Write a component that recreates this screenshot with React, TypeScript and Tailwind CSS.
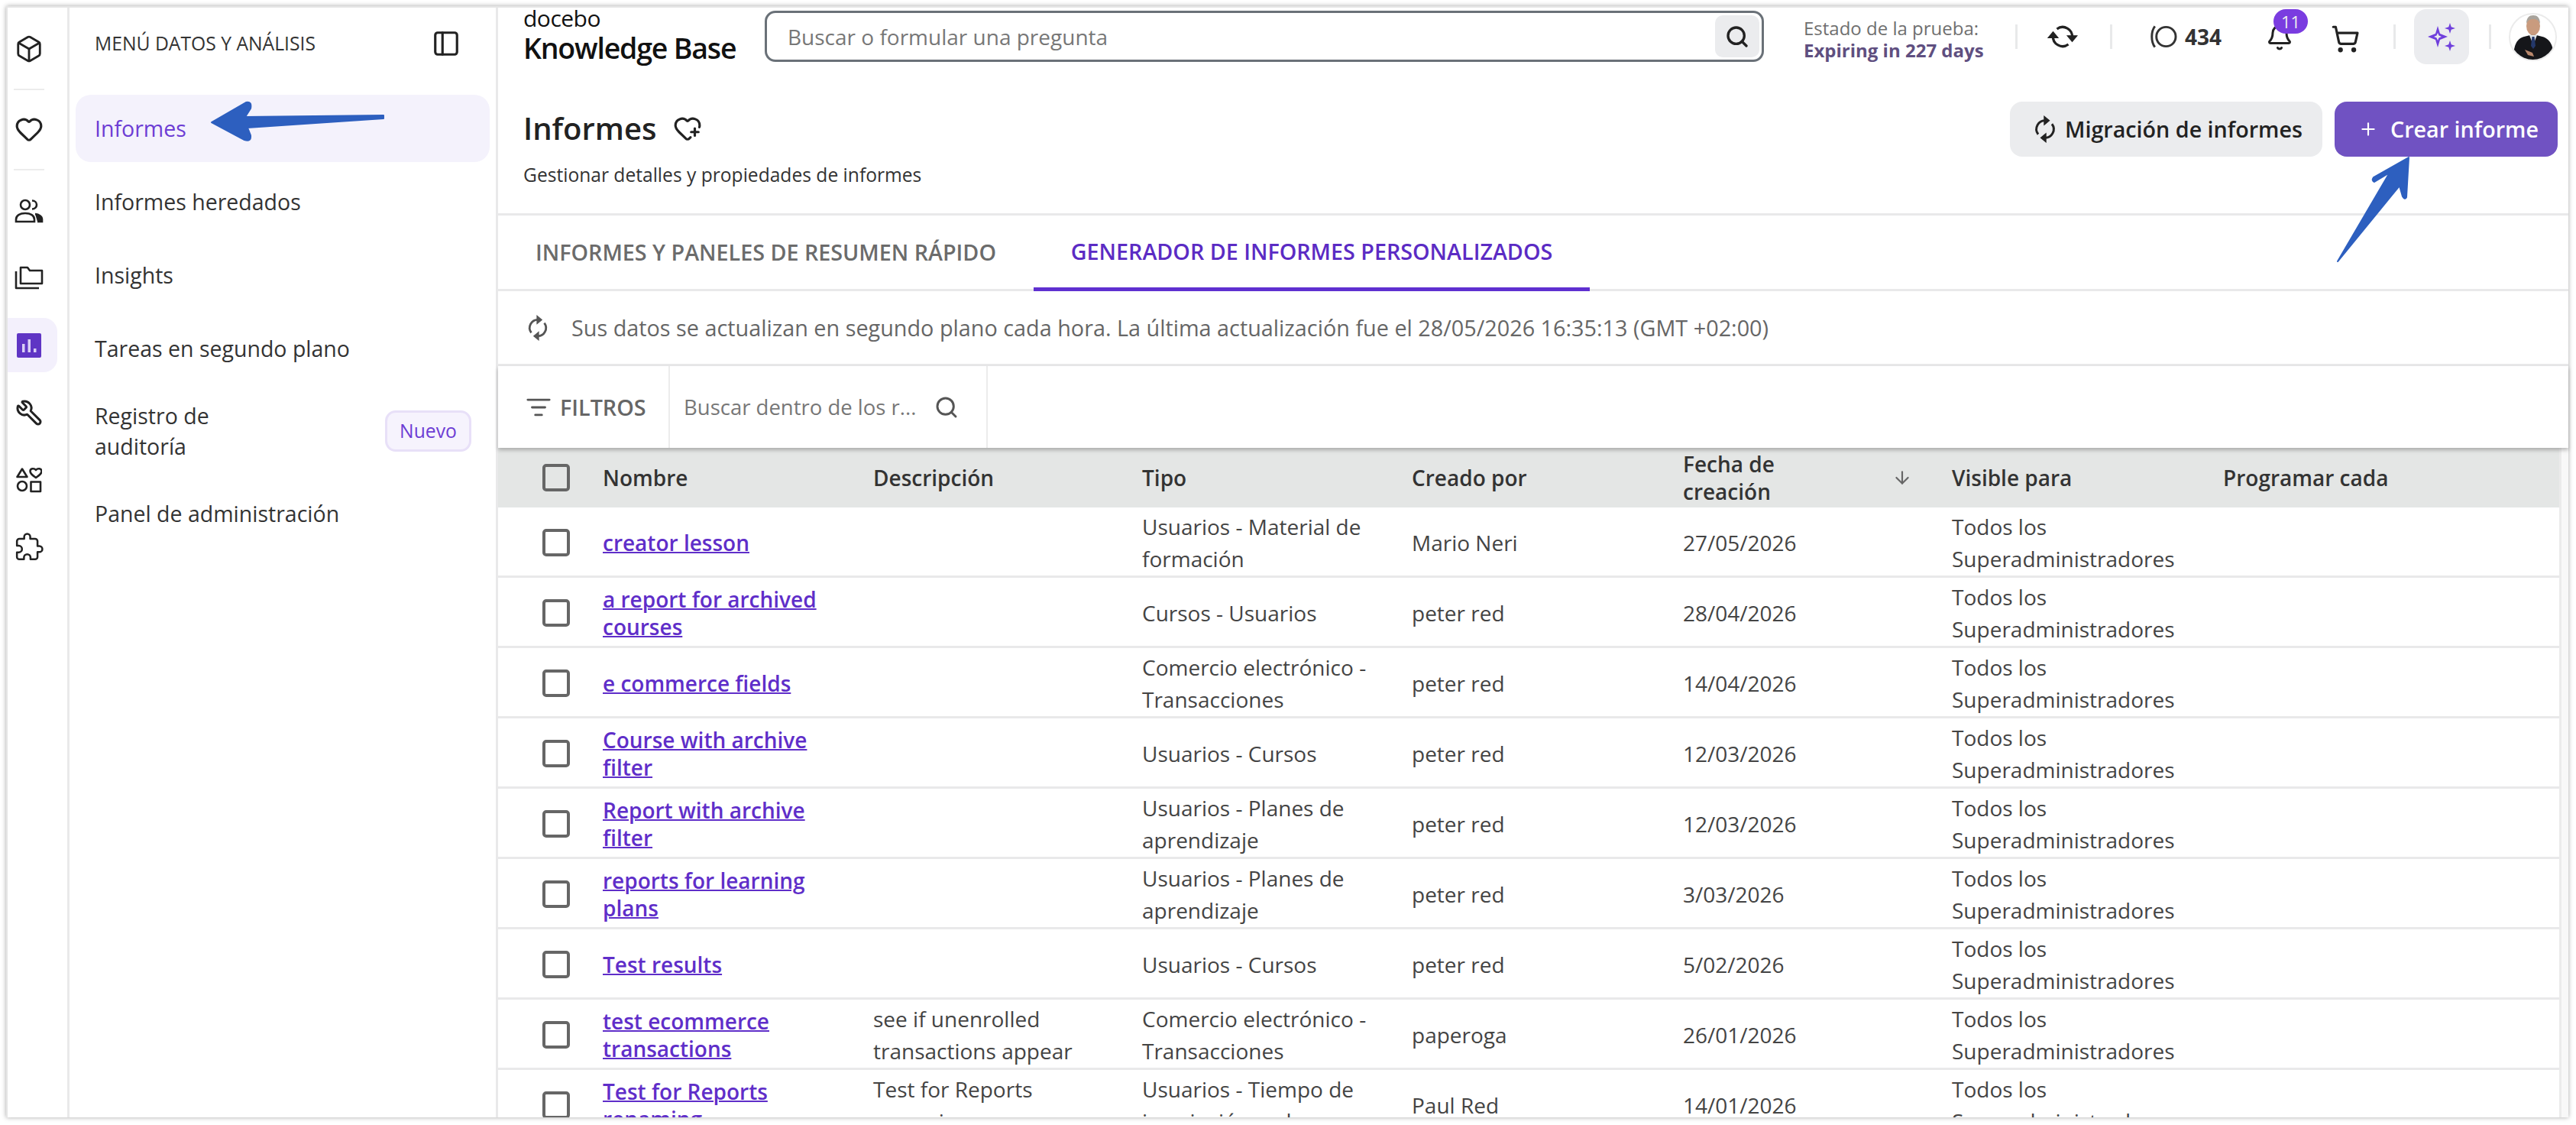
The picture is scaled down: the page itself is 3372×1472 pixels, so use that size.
import { ArrowDown, Bell, Box, Heart, HeartPlus, ListFilter, PanelLeft, Plus, Search, ShoppingCart, Wrench } from "lucide-react";

type Report = {
  name: string;
  description?: string;
  type: string;
  author: string;
  date: string;
};

const reports: Report[] = [
  { name: "creator lesson", type: "Usuarios - Material de formación", author: "Mario Neri", date: "27/05/2026" },
  { name: "a report for archived courses", type: "Cursos - Usuarios", author: "peter red", date: "28/04/2026" },
  { name: "e commerce fields", type: "Comercio electrónico - Transacciones", author: "peter red", date: "14/04/2026" },
  { name: "Course with archive filter", type: "Usuarios - Cursos", author: "peter red", date: "12/03/2026" },
  { name: "Report with archive filter", type: "Usuarios - Planes de aprendizaje", author: "peter red", date: "12/03/2026" },
  { name: "reports for learning plans", type: "Usuarios - Planes de aprendizaje", author: "peter red", date: "3/03/2026" },
  { name: "Test results", type: "Usuarios - Cursos", author: "peter red", date: "5/02/2026" },
  {
    name: "test ecommerce transactions",
    description: "see if unenrolled transactions appear",
    type: "Comercio electrónico - Transacciones",
    author: "paperoga",
    date: "26/01/2026",
  },
  {
    name: "Test for Reports renaming",
    description: "Test for Reports renaming",
    type: "Usuarios - Tiempo de inscripción en los",
    author: "Paul Red",
    date: "14/01/2026",
  },
];

const menuItems = ["Informes heredados", "Insights", "Tareas en segundo plano"];

const columns = "grid grid-cols-[137px_354px_352px_353px_355px_352px_355px_1fr]";

function Checkbox() {
  return <div className="ml-[58px] h-9 w-9 rounded-[5px] border-4 border-[#666]" />;
}

function Divider() {
  return <div className="h-8 w-[3px] bg-[#e8e9ea]" />;
}

function PeopleIcon() {
  return (
    <svg width="38" height="32" viewBox="0 0 38 32" fill="none" stroke="#222" strokeWidth="2.6">
      <circle cx="14" cy="8" r="6" />
      <path d="M2 30v-3c0-5 5-8 12-8s12 3 12 8v3H2Z" />
      <path d="M23 2.500c3.500 0 6 2.500 6 5.500s-2.500 5.500-6 5.500" />
      <path d="M27 20c5 .5 9 3 9 7v3h-6" fill="#222" />
    </svg>
  );
}

function FolderIcon() {
  return (
    <svg width="38" height="32" viewBox="0 0 38 32" fill="none" stroke="#222" strokeWidth="2.6" strokeLinejoin="round">
      <path d="M8 24V3h9l3 4h16v17H8Z" />
      <path d="M2 8v22h30" />
    </svg>
  );
}

function ChartIcon() {
  return (
    <svg width="32" height="32" viewBox="0 0 32 32">
      <rect width="32" height="32" rx="2" fill="#5f35c4" />
      <rect x="7" y="14" width="3.500" height="11" fill="#d9cff5" />
      <rect x="14.500" y="8" width="3.500" height="17" fill="#d9cff5" />
      <rect x="22" y="20" width="3.500" height="5" fill="#d9cff5" />
    </svg>
  );
}

function ShapesIcon() {
  return (
    <svg width="34" height="34" viewBox="0 0 34 34" fill="none" stroke="#222" strokeWidth="2.6" strokeLinejoin="round">
      <path d="M8 2.500 14.500 13h-13L8 2.500Z" />
      <path d="M26 14c-5-3.500-7.500-5.500-7.500-8.500 0-3.500 5-4.500 7.500-1.500 2.500-3 7.500-2 7.500 1.500 0 3-2.500 5-7.500 8.500Z" />
      <circle cx="8" cy="25" r="6" />
      <rect x="19.500" y="19.500" width="12.500" height="12.500" />
    </svg>
  );
}

function PuzzleIcon() {
  return (
    <svg width="38" height="38" viewBox="0 0 24 24" fill="none" stroke="#222" strokeWidth="1.6" strokeLinejoin="round">
      <path d="M20.500 11H19V7c0-1.100-.9-2-2-2h-4V3.500C13 2.120 11.880 1 10.500 1S8 2.120 8 3.500V5H4c-1.100 0-1.990.9-1.990 2v3.800H3.500c1.490 0 2.700 1.210 2.700 2.700s-1.210 2.700-2.700 2.700H2V20c0 1.100.9 2 2 2h3.800v-1.500c0-1.490 1.210-2.700 2.700-2.700s2.700 1.210 2.700 2.700V22H17c1.100 0 2-.9 2-2v-4h1.500c1.380 0 2.500-1.120 2.500-2.500S21.880 11 20.500 11Z" />
    </svg>
  );
}

function SyncIcon({ size, color, className }: { size: number; color: string; className?: string }) {
  return (
    <svg className={className} width={size} height={size} viewBox="0 0 32 32" fill="none" stroke={color} strokeWidth="2.6">
      <path d="M8 22a10 10 0 0 1 9-16" />
      <path d="M24 10a10 10 0 0 1-9 16" />
      <path d="M15 1l6 5-6 5Z" fill={color} strokeWidth="1" />
      <path d="M17 21l-6 5 6 5Z" fill={color} strokeWidth="1" />
    </svg>
  );
}

function CreditIcon() {
  return (
    <svg width="38" height="34" viewBox="0 0 38 34" fill="none" stroke="#333" strokeWidth="3">
      <circle cx="23" cy="17" r="13" />
      <path d="M8 3C2.500 10 2.500 24 8 31" />
    </svg>
  );
}

function SparkIcon() {
  return (
    <svg width="38" height="50" viewBox="0 0 38 50" fill="#6f3fdc">
      <path
        d="M14 11 17 21l10 4-10 4-3 10-3-10-10-4 10-4 3-10Zm0 9-1.500 3.500L9 25l3.500 1.500L14 30l1.500-3.500L19 25l-3.500-1.500L14 20Z"
        fillRule="evenodd"
      />
      <path d="M30 7l1.700 5.300L37 14l-5.300 1.700L30 21l-1.700-5.300L23 14l5.300-1.700L30 7Z" />
      <path d="M30 30l1.700 5.300L37 37l-5.300 1.700L30 44l-1.700-5.300L23 37l5.300-1.700L30 30Z" />
    </svg>
  );
}

function Avatar() {
  return (
    <div className="h-[63px] w-[63px] overflow-hidden rounded-full border-2 border-[#ebebeb] bg-white">
      <svg width="60" height="60" viewBox="0 0 60 60">
        <path d="M4 60c0-20 4-28 14-31l12-3 12 3c10 3 15 11 15 31H4Z" fill="#15161a" />
        <path d="M25 27h10l-5 13-5-13Z" fill="#dfe3e6" />
        <path d="M28.500 29h3l1.500 12-3 4-3-4 1.500-12Z" fill="#24386a" />
        <ellipse cx="30" cy="15" rx="9" ry="12" fill="#c99b7e" />
        <path d="M21 12c0-8 4-11 9-11s9 3 9 11c-2-4-4-6-9-6s-7 2-9 6Z" fill="#a8a39c" />
        <path d="M19 46l10 4 2 5-8-2-4-7Z" fill="#b8876c" />
      </svg>
    </div>
  );
}

export default function App() {
  return (
    <div className="relative h-[1472px] w-[3372px] overflow-hidden bg-white pt-2 pr-[10px] pb-[10px] pl-2 font-['Open_Sans',sans-serif] text-[#333]">
      <div className="flex h-full border-t-2 border-l-2 border-[#e5e5e5] bg-white shadow-[0_0_6px_rgba(0,0,0,0.35)]">
        {/* icon rail */}
        <aside className="flex w-[81px] shrink-0 flex-col items-center border-r-[3px] border-[#e9e9ea] pt-[35px] pr-[22px]">
          <Box size={38} strokeWidth={1.8} color="#222" />
          <div className="mt-[33px] h-0.5 w-10 bg-[#ececec]" />
          <Heart size={38} strokeWidth={2} color="#222" className="mt-[32px]" />
          <div className="mt-[33px] h-0.5 w-10 bg-[#ececec]" />
          <div className="mt-[37px] flex h-8 items-center"><PeopleIcon /></div>
          <div className="mt-[55px] flex h-8 items-center"><FolderIcon /></div>
          <div className="mt-[37px] flex h-[71px] w-[65px] shrink-0 items-center justify-center self-start rounded-r-[18px] bg-[#f3f0fc] pr-[9px]"><ChartIcon /></div>
          <Wrench size={36} strokeWidth={2} color="#222" className="mt-[35px] -scale-x-100" />
          <div className="mt-[53px]"><ShapesIcon /></div>
          <div className="mt-[52px]"><PuzzleIcon /></div>
        </aside>

        {/* section menu */}
        <aside className="w-[561px] shrink-0 border-r-[3px] border-[#e9e9ea] px-2 pt-[29px]">
          <div className="flex h-9 items-center justify-between pl-[25px] pr-[38px]">
            <span className="text-[24.700px] text-[#333]">MENÚ DATOS Y ANÁLISIS</span>
            <PanelLeft size={38} strokeWidth={2} color="#222" />
          </div>
          <nav className="mt-[49px] flex flex-col gap-2 text-[28.500px]">
            <div className="flex h-[88px] items-center rounded-[20px] bg-[#f4f2fc] pl-[25px] text-[#6d3dd4]">Informes</div>
            {menuItems.map((item) => (
              <div key={item} className="flex h-[88px] items-center pl-[25px]">
                {item}
              </div>
            ))}
            <div className="flex h-[112px] items-center justify-between pl-[25px] pr-6">
              <span className="w-[190px] leading-[40px]">Registro de auditoría</span>
              <span className="flex h-[54px] w-[113px] items-center justify-center rounded-[14px] border-[3px] border-[#e8e0f8] bg-[#f6f3fd] text-[24.700px] text-[#6d3dd4]">
                Nuevo
              </span>
            </div>
            <div className="flex h-[88px] items-center pl-[25px]">Panel de administración</div>
          </nav>
        </aside>

        <main className="flex min-w-0 flex-1 flex-col">
          {/* top bar */}
          <header className="flex h-[87px] shrink-0 items-start pl-[33px]">
            <div className="w-[316px] shrink-0">
              <div className="text-[30px] leading-[28px] font-medium tracking-[-0.5px] text-[#111]">docebo</div>
              <div className="mt-[3px] text-[37.500px] leading-[44px] font-semibold tracking-[-1.2px] text-[#111]">Knowledge Base</div>
            </div>
            <div className="mt-[4px] flex h-[67px] w-[1308px] shrink-0 items-center justify-between rounded-[14px] border-[3px] border-[#6a7178] pl-[27px] pr-[3px]">
              <span className="text-[28px] text-[#777]">Buscar o formular una pregunta</span>
              <span className="flex h-[55px] w-[58px] items-center justify-center rounded-[10px] bg-[#ebecee]">
                <Search size={32} strokeWidth={2.5} color="#222" />
              </span>
            </div>
            <div className="ml-[52px] w-[277px] shrink-0 pt-[12px] text-[24px] leading-[29px]">
              <div className="text-[#6f6f6f]">Estado de la prueba:</div>
              <div className="font-bold text-[#5f4f80]">Expiring in 227 days</div>
            </div>
            <div className="mt-[22px]"><Divider /></div>
            <div className="ml-[39px] mt-[18px]"><SyncIcon size={40} color="#222" className="rotate-90" /></div>
            <div className="ml-[42px] mt-[22px]"><Divider /></div>
            <div className="ml-[48px] mt-[21px] flex w-[95px] shrink-0 items-center gap-[10px]">
              <CreditIcon />
              <span className="text-[28px] font-bold leading-[34px] text-[#333]">434</span>
            </div>
            <div className="relative ml-[58px] mt-[21px]">
              <Bell size={36} strokeWidth={2} color="#222" />
              <span className="absolute -top-[19px] left-[10px] flex h-8 w-[45px] items-center justify-center rounded-full bg-[#7a3ce0] text-[22px] text-[#eee]">
                11
              </span>
            </div>
            <ShoppingCart size={38} strokeWidth={2} color="#222" className="ml-[49px] mt-[22px]" />
            <div className="ml-[44px] mt-[22px]"><Divider /></div>
            <div className="ml-[24px] mt-[2px] flex h-[72px] w-[72px] shrink-0 items-center justify-center rounded-[16px] bg-[#ebecef]">
              <SparkIcon />
            </div>
            <div className="ml-[26px] mt-[22px]"><Divider /></div>
            <div className="ml-[23px] mt-[7px]"><Avatar /></div>
          </header>

          {/* title */}
          <section className="flex h-[185px] shrink-0 items-start justify-between border-b-[3px] border-[#e9e9ea] pl-[33px] pr-[14px]">
            <div>
              <div className="flex items-center gap-[22px] pt-[41px]">
                <h1 className="text-[40px] leading-[60px] font-semibold text-[#222]">Informes</h1>
                <HeartPlus size={38} strokeWidth={2} color="#222" />
              </div>
              <p className="mt-[15px] text-[24.600px] leading-[32px] text-[#333]">Gestionar detalles y propiedades de informes</p>
            </div>
            <div className="flex gap-4 pt-[36px]">
              <button className="flex h-[72px] w-[409px] items-center gap-2 rounded-[16px] bg-[#ebecee] pl-7 text-[28.700px] font-semibold text-[#222]">
                <SyncIcon size={36} color="#222" />
                Migración de informes
              </button>
              <button className="flex h-[72px] w-[292px] items-center gap-4 rounded-[16px] bg-[#7052c2] pl-[31px] text-[28.700px] font-semibold text-white">
                <Plus size={26} strokeWidth={2} color="#fff" />
                Crear informe
              </button>
            </div>
          </section>

          {/* tabs */}
          <div className="flex h-[99px] shrink-0 border-b-[3px] border-[#e9e9ea] text-[28.700px] font-semibold">
            <div className="flex w-[701px] items-center pl-[49px] text-[#6b6b6b]">INFORMES Y PANELES DE RESUMEN RÁPIDO</div>
            <div className="-mb-[3px] flex w-[728px] items-center justify-center border-b-[5px] border-[#5f30d0] text-[#5b2bc4]">
              GENERADOR DE INFORMES PERSONALIZADOS
            </div>
          </div>

          {/* refresh info */}
          <div className="flex h-[98px] shrink-0 items-center gap-[27px] border-b-[3px] border-[#e9e9ea] pl-[35px] text-[28.800px] text-[#666]">
            <SyncIcon size={34} color="#555" />
            Sus datos se actualizan en segundo plano cada hora. La última actualización fue el 28/05/2026 16:35:13 (GMT +02:00)
          </div>

          {/* filters */}
          <div className="relative z-10 flex h-[107px] shrink-0 bg-white shadow-[0_3px_5px_rgba(0,0,0,0.25)]">
            <div className="flex w-[225px] items-center gap-[11px] border-r-2 border-[#ececec] pl-9 text-[28.700px] font-semibold text-[#666]">
              <ListFilter size={34} strokeWidth={2} color="#555" />
              FILTROS
            </div>
            <div className="flex w-[416px] items-center justify-between border-r-2 border-[#ececec] pl-[18px] pr-9">
              <span className="text-[27.500px] text-[#777]">Buscar dentro de los r...</span>
              <Search size={32} strokeWidth={2.2} color="#555" />
            </div>
          </div>

          {/* table */}
          <div className="flex min-h-0 flex-1">
            <div className="min-w-0 flex-1 overflow-hidden">
              <div className={`${columns} h-[78px] items-center bg-[#e4e6e5] text-[28px] font-semibold leading-[36px] text-[#333]`}>
                <Checkbox />
                <div>Nombre</div>
                <div>Descripción</div>
                <div>Tipo</div>
                <div>Creado por</div>
                <div className="flex items-center justify-between pr-[52px]">
                  <span className="w-[170px]">Fecha de creación</span>
                  <ArrowDown size={26} strokeWidth={2} color="#666" />
                </div>
                <div>Visible para</div>
                <div>Programar cada</div>
              </div>
              {reports.map((r) => (
                <div key={r.name} className={`${columns} h-[92px] items-center border-b-[3px] border-[#e9e9ea] pt-[3px] text-[28px] leading-[42px] text-[#444]`}>
                  <Checkbox />
                  <a href="#" className="pr-[40px] leading-[36px] font-semibold text-[#5f2ec9] underline decoration-2">
                    {r.name}
                  </a>
                  <div className="pr-[20px]">{r.description}</div>
                  <div className="pr-[20px]">{r.type}</div>
                  <div>{r.author}</div>
                  <div>{r.date}</div>
                  <div className="pr-[30px]">Todos los Superadministradores</div>
                  <div />
                </div>
              ))}
            </div>
            <div className="w-3 shrink-0 border-l-[3px] border-[#ebebeb] bg-[#f8f8f8]" />
          </div>
        </main>
      </div>

      {/* annotation arrows */}
      <svg className="pointer-events-none absolute top-0 left-0 z-20" width="3372" height="1472" viewBox="0 0 3372 1472">
        <path
          d="M277 160 L322 134 Q330 132 328 142 L321 153 L502 151 L502 155 L324 167 L328 177 Q329 186 320 183 Z"
          fill="#2d5fbf"
          stroke="#2d5fbf"
          strokeWidth="2"
          strokeLinejoin="round"
        />
        <path
          d="M3153 206 L3150 258 Q3148 262 3145 257 L3141 243 L3060 342 L3128 226 L3108 238 Q3104 236 3107 232 Z"
          fill="#2d5fbf"
          stroke="#2d5fbf"
          strokeWidth="2"
          strokeLinejoin="round"
        />
      </svg>
    </div>
  );
}
